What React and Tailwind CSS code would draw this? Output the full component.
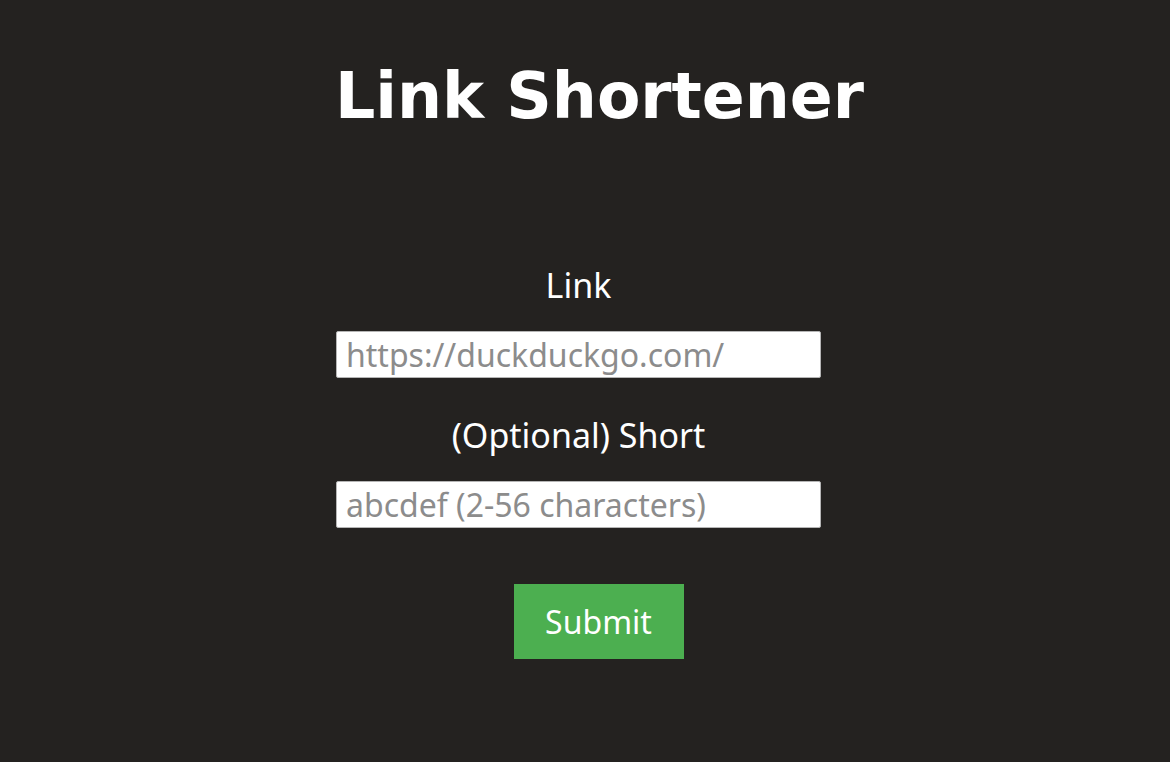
import React, { useState } from 'react'

const App = () => {
  const [link, setLink] = useState('')
  const [short, setShort] = useState('')

  return (
    <div className='min-h-screen w-full bg-[#242220] text-white flex flex-col items-center pl-[29px] font-["Noto_Sans",sans-serif]'>
      <h1 className='mt-[64px] text-[63.3px] leading-[64px] font-bold font-["DejaVu_Sans",sans-serif]'>Link Shortener</h1>
      <form className='flex flex-col items-center mt-[140px] mr-[42px]' onSubmit={(e) => e.preventDefault()}>
        <label htmlFor='link' className='text-[34px] leading-[34px]'>Link</label>
        <input
          id='link'
          value={link}
          onChange={(e) => setLink(e.target.value)}
          placeholder='https://duckduckgo.com/'
          className='mt-[29px] w-[485px] h-[47px] bg-white border border-[#b5b5b5] rounded-[2px] px-[9px] text-[32px] text-black placeholder:text-[#8c8c8c] outline-none'
        />
        <label htmlFor='short' className='mt-[40px] text-[34px] leading-[34px]'>(Optional) Short</label>
        <input
          id='short'
          value={short}
          onChange={(e) => setShort(e.target.value)}
          placeholder='abcdef (2-56 characters)'
          className='mt-[29px] w-[485px] h-[47px] bg-white border border-[#b5b5b5] rounded-[2px] px-[9px] text-[32px] text-black placeholder:text-[#8c8c8c] outline-none'
        />
      </form>
      <button className='mt-[56px] mr-[2px] w-[170px] h-[75px] bg-[#4caf50] text-white text-[32px] cursor-pointer'>Submit</button>
    </div>
  )
}

export default App
